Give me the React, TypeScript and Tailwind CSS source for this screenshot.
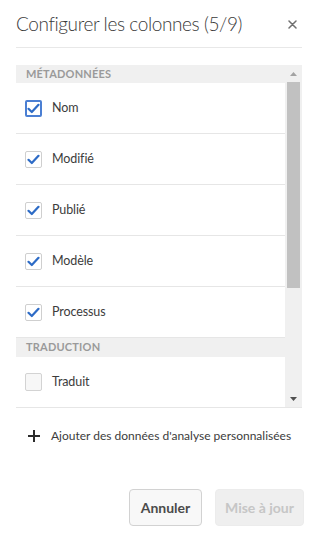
import React from "react";

type Row = { label: string; checked: boolean; focused?: boolean };

const metadata: Row[] = [
  { label: "Nom", checked: true, focused: true },
  { label: "Modifié", checked: true },
  { label: "Publié", checked: true },
  { label: "Modèle", checked: true },
  { label: "Processus", checked: true },
];

const translation: Row[] = [{ label: "Traduit", checked: false }];

function Checkbox({ checked, focused }: { checked: boolean; focused?: boolean }) {
  return (
    <span
      className={
        focused
          ? "flex h-[17px] w-[17px] items-center justify-center rounded-[2px] border-2 border-[#4b7fd3] bg-white"
          : checked
          ? "flex h-[17px] w-[17px] items-center justify-center rounded-[2px] border border-[#cfcfcf] bg-white"
          : "flex h-[18px] w-[17px] items-center justify-center rounded-[2px] border border-[#d3d3d3] bg-[#f7f7f7]"
      }
    >
      {checked && (
        <svg width="13" height="11" viewBox="0 0 13 11" fill="none">
          <path d="M1.5 5.8 L4.8 9 L11.5 1.8" stroke="#2d6bc6" strokeWidth="2.2" strokeLinecap="round" strokeLinejoin="round" />
        </svg>
      )}
    </span>
  );
}

function ItemRow({ row }: { row: Row }) {
  return (
    <div className="flex h-[51px] items-center gap-[10px] border-b border-[#e6e6e6] pl-[9px]">
      <Checkbox checked={row.checked} focused={row.focused} />
      <span className="text-[12.5px] tracking-[-0.1px] text-[#3c3c3c]">{row.label}</span>
    </div>
  );
}

function SectionHeader({ title, tall }: { title: string; tall?: boolean }) {
  return (
    <div className={`flex ${tall ? "h-[19px]" : "h-[18px]"} items-center bg-[#f0f0f0] pl-[10px] text-[11px] font-bold tracking-[0.2px] text-[#9a9a9a]`}>
      {title}
    </div>
  );
}

export default function App() {
  return (
    <div className="flex h-[542px] w-[318px] flex-col bg-white px-4 font-['Lato','Noto_Sans',sans-serif]">
      <div className="flex h-[48px] shrink-0 items-center justify-between border-b border-[#e8e8e8]">
        <h1 className="pt-[2px] text-[19px] font-light tracking-[-0.4px] text-[#3a3a3a]">Configurer les colonnes (5/9)</h1>
        <svg width="9" height="9" viewBox="0 0 9 9" className="mr-[5px] mt-[2px]">
          <path d="M1 1 L8 8 M8 1 L1 8" stroke="#707070" strokeWidth="1.5" strokeLinecap="round" />
        </svg>
      </div>

      <div className="mt-[17px] flex h-[343px] shrink-0 border-b border-[#e6e6e6]">
        <div className="flex-1 overflow-hidden">
          <SectionHeader title="MÉTADONNÉES" />
          {metadata.map((r) => (
            <ItemRow key={r.label} row={r} />
          ))}
          <SectionHeader title="TRADUCTION" tall />
          {translation.map((r) => (
            <ItemRow key={r.label} row={r} />
          ))}
        </div>
        <div className="flex w-[17px] flex-col items-center bg-[#f0f0f0]">
          <div className="flex h-[17px] w-full items-center justify-center">
            <svg width="7" height="4" viewBox="0 0 7 4">
              <path d="M0 4 L3.5 0 L7 4 Z" fill="#a3a3a3" />
            </svg>
          </div>
          <div className="h-[206px] w-[13px] bg-[#c1c1c1]" />
          <div className="flex-1" />
          <div className="flex h-[17px] w-full items-center justify-center">
            <svg width="7" height="4" viewBox="0 0 7 4">
              <path d="M0 0 L7 0 L3.5 4 Z" fill="#505050" />
            </svg>
          </div>
        </div>
      </div>

      <div className="mt-[19px] flex items-center gap-[11px] pl-[12px]">
        <svg width="12" height="12" viewBox="0 0 12 12" className="shrink-0">
          <path d="M6 0 V12 M0 6 H12" stroke="#2c2c2c" strokeWidth="2" />
        </svg>
        <span className="whitespace-nowrap text-[12px] text-[#3c3c3c]">Ajouter des données d'analyse personnalisées</span>
      </div>

      <div className="-mr-[2px] mt-auto mb-[16px] flex justify-end gap-[13px]">
        <button className="h-[37px] w-[73px] rounded-[4px] border border-[#d2d2d2] bg-[#f8f8f8] text-[14px] font-bold text-[#4b4b4b]">
          Annuler
        </button>
        <button className="h-[37px] w-[89px] rounded-[4px] border border-[#ececec] bg-[#efefef] text-[14px] font-bold text-[#c6c6c6]">
          Mise à jour
        </button>
      </div>
    </div>
  );
}
